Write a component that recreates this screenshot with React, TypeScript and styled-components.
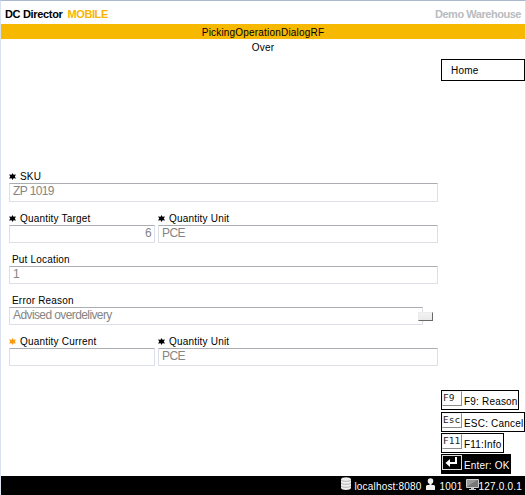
import React from "react";
import styled, { createGlobalStyle } from "styled-components";

const Global = createGlobalStyle`
  * { box-sizing: border-box; }
  body { margin: 0; background: #fff; color: #000; font-family: "Liberation Sans", Arial, sans-serif; font-size: 10px; letter-spacing: 0.19px; }
`;

const Screen = styled.div`
  width: 526px;
  height: 495px;
  display: flex;
  flex-direction: column;
  border: solid #d8e1f0;
  border-width: 1px 1px 0;
  border-top-color: #a9b7cf;
  overflow: hidden;
  white-space: nowrap;
`;

const Header = styled.header`
  height: 23px;
  flex: none;
  display: flex;
  justify-content: space-between;
  padding: 6px 4px 0 4px;
  font-size: 11px;
  line-height: 14px;
  font-weight: bold;
`;

const Brand = styled.div`
  letter-spacing: -0.33px;
  display: flex;
  gap: 5px;
`;

const Product = styled.span`
  color: #f7b500;
  letter-spacing: -0.4px;
`;

const Site = styled.div`
  color: #b8bcc1;
  letter-spacing: -0.46px;
`;

const Title = styled.h1`
  height: 15px;
  flex: none;
  margin: 0;
  padding-top: 1px;
  background: #f7b800;
  font-size: 10px;
  font-weight: normal;
  line-height: 15px;
  text-align: center;
`;

const Subtitle = styled.div`
  height: 19px;
  flex: none;
  line-height: 18px;
  text-align: center;
`;

const Main = styled.main`
  flex: 1;
  min-height: 0;
  display: grid;
  grid-template-columns: 429px 84px;
  column-gap: 3px;
  padding-left: 8px;
`;

const Form = styled.form`
  padding-top: 111px;
`;

const FieldRow = styled.div<{ $height?: number }>`
  display: flex;
  gap: 3px;
  height: ${(p) => p.$height ?? 41}px;
`;

const Field = styled.div<{ $width: number }>`
  width: ${(p) => p.$width}px;
`;

const Label = styled.label<{ $plain?: boolean }>`
  display: flex;
  align-items: center;
  gap: 3px;
  height: 14px;
  line-height: 14px;
  padding-top: 2px;
  padding-left: ${(p) => (p.$plain ? 3 : 0)}px;
`;

const ValueBox = styled.div<{ $right?: boolean; $height?: number }>`
  height: ${(p) => p.$height ?? 18}px;
  border: 1px solid #dcdfe8;
  border-top-color: #abadb3;
  border-radius: 1px;
  padding: 0 3px;
  color: #858585;
  font-size: 12px;
  letter-spacing: -0.6px;
  line-height: 15px;
  text-align: ${(p) => (p.$right ? "right" : "left")};
`;

const SelectWrap = styled.div`
  position: relative;
  width: 414px;
`;

const SelectButton = styled.button`
  position: absolute;
  left: 409px;
  top: 5px;
  width: 15px;
  height: 9px;
  padding: 0;
  border: 1px solid #ececec;
  border-right-color: #696969;
  border-bottom-color: #696969;
  background: linear-gradient(#f2f2f2, #e9e9e9);
`;

const Actions = styled.aside`
  display: flex;
  flex-direction: column;
  align-items: flex-start;
  padding: 1px 0 2px;
`;

const HomeButton = styled.button`
  width: 84px;
  height: 22px;
  margin-bottom: auto;
  padding: 1px 0 0 9px;
  border: 1px solid #000;
  background: #fff;
  color: #000;
  font: inherit;
  letter-spacing: inherit;
  text-align: left;
`;

const KeyButton = styled.button<{ $width: number; $dark?: boolean; $gap?: number }>`
  display: flex;
  align-items: flex-start;
  gap: 2px;
  width: ${(p) => p.$width}px;
  height: 20px;
  margin-top: ${(p) => p.$gap ?? 1}px;
  padding: 0;
  border: 1px solid #000;
  background: ${(p) => (p.$dark ? "#000" : "#fff")};
  color: ${(p) => (p.$dark ? "#fff" : "#000")};
  font: inherit;
  letter-spacing: inherit;
  white-space: nowrap;
`;

const KeyText = styled.span`
  height: 18px;
  padding-top: 2px;
  line-height: 18px;
`;

const KeyCap = styled.span<{ $dark?: boolean }>`
  flex: none;
  width: 20px;
  height: 15px;
  border: 1px solid ${(p) => (p.$dark ? "#ddd" : "#f2f2f2")};
  border-right-color: ${(p) => (p.$dark ? "#ddd" : "#8d8d8d")};
  border-bottom-color: ${(p) => (p.$dark ? "#ddd" : "#8d8d8d")};
  font-family: "DejaVu Sans Mono", monospace;
  font-size: 9.5px;
  letter-spacing: 0;
  line-height: 12px;
  text-align: left;
  color: ${(p) => (p.$dark ? "#fff" : "#222")};
`;

const Footer = styled.footer`
  height: 19px;
  flex: none;
  display: flex;
  justify-content: flex-end;
  margin: 0 -1px;
  padding-right: 4px;
  background: #000;
  color: #fff;
  line-height: 21px;
`;

const Status = styled.span<{ $gap: number; $after?: number }>`
  display: flex;
  gap: ${(p) => p.$gap}px;
  margin-right: ${(p) => p.$after ?? 0}px;
`;

const StarIcon = styled.svg`
  width: 8px;
  height: 8px;
  flex: none;
`;

function Star({ color = "#000" }: { color?: string }) {
  return (
    <StarIcon viewBox="0 0 8 8">
      <path d="M3.500 0 4.500 1.800 7 1.500 5.800 3.500 7 5.500 4.500 5.200 3.500 7 2.600 5.200 0 5.500 1.300 3.500 0 1.500 2.600 1.800Z" fill={color} />
    </StarIcon>
  );
}

type FieldProps = { label: string; value: string; width: number; star?: string; right?: boolean; height?: number };

function TextField({ label, value, width, star, right, height }: FieldProps) {
  return (
    <Field $width={width}>
      <Label $plain={!star}>{star && <Star color={star} />}{label}</Label>
      <ValueBox $right={right} $height={height}>{value}</ValueBox>
    </Field>
  );
}

function DatabaseIcon() {
  return (
    <svg width="10" height="14" viewBox="0 0 10 14">
      <path d="M0 3.500c0-3 10-3 10 0v8.500c0 2.500-10 2.500-10 0Z" fill="#f0f0f0" />
      <path d="M0 4.100c1 1.600 9 1.600 10 0M0 7.100c1 1.600 9 1.600 10 0M0 10.100c1 1.600 9 1.600 10 0" fill="none" stroke="#999" strokeWidth=".7" />
    </svg>
  );
}

function UserIcon() {
  return (
    <svg width="9" height="15" viewBox="0 0 9 15">
      <path d="M1.700 5a2.800 2.800 0 1 1 5.600 0c0 1.500-.8 2.500-1.800 3v1H8l1 1v4H0v-4l1-1h2.500V8C2.500 7.500 1.700 6.500 1.700 5Z" fill="#f2f2f2" />
    </svg>
  );
}

function MonitorIcon() {
  return (
    <svg width="13" height="15" viewBox="0 0 13 15">
      <path d="M.5 3.500h12v8H.5Z" fill="#777" stroke="#ccc" />
      <path d="M1 4h10L2 10H1Z" fill="#999" />
      <path d="M5 12h3v1h2v1H3v-1h2Z" fill="#ccc" />
    </svg>
  );
}

function EnterIcon() {
  return (
    <svg width="17" height="12" viewBox="0 0 17 12">
      <path d="M13 1v6H6" fill="none" stroke="#fff" strokeWidth="2" />
      <path d="M2.500 7 7 3v8Z" fill="#fff" />
    </svg>
  );
}

export default function App() {
  return (
    <>
      <Global />
      <Screen>
        <Header>
          <Brand><span>DC Director</span><Product>MOBILE</Product></Brand>
          <Site>Demo Warehouse</Site>
        </Header>
        <Title>PickingOperationDialogRF</Title>
        <Subtitle>Over</Subtitle>
        <Main>
          <Form>
            <FieldRow $height={42}>
              <TextField label="SKU" value="ZP 1019" width={429} star="#000" height={19} />
            </FieldRow>
            <FieldRow>
              <TextField label="Quantity Target" value="6" width={146} star="#000" right />
              <TextField label="Quantity Unit" value="PCE" width={280} star="#000" />
            </FieldRow>
            <FieldRow>
              <TextField label="Put Location" value="1" width={429} />
            </FieldRow>
            <FieldRow>
              <Field $width={429}>
                <Label $plain>Error Reason</Label>
                <SelectWrap>
                  <ValueBox>Advised overdelivery</ValueBox>
                  <SelectButton type="button" aria-label="Choose reason" />
                </SelectWrap>
              </Field>
            </FieldRow>
            <FieldRow>
              <TextField label="Quantity Current" value="" width={146} star="#f99a0e" />
              <TextField label="Quantity Unit" value="PCE" width={280} star="#000" />
            </FieldRow>
          </Form>
          <Actions>
            <HomeButton>Home</HomeButton>
            <KeyButton $width={78}><KeyCap>F9</KeyCap><KeyText>F9: Reason</KeyText></KeyButton>
            <KeyButton $width={84} $gap={2}><KeyCap>Esc</KeyCap><KeyText>ESC: Cancel</KeyText></KeyButton>
            <KeyButton $width={63}><KeyCap>F11</KeyCap><KeyText>F11:Info</KeyText></KeyButton>
            <KeyButton $width={70} $dark><KeyCap $dark><EnterIcon /></KeyCap><KeyText>Enter: OK</KeyText></KeyButton>
          </Actions>
        </Main>
        <Footer>
          <Status $gap={3} $after={4}><DatabaseIcon />localhost:8080</Status>
          <Status $gap={5} $after={3}><UserIcon />1001</Status>
          <Status $gap={0}><MonitorIcon />127.0.0.1</Status>
        </Footer>
      </Screen>
    </>
  );
}
